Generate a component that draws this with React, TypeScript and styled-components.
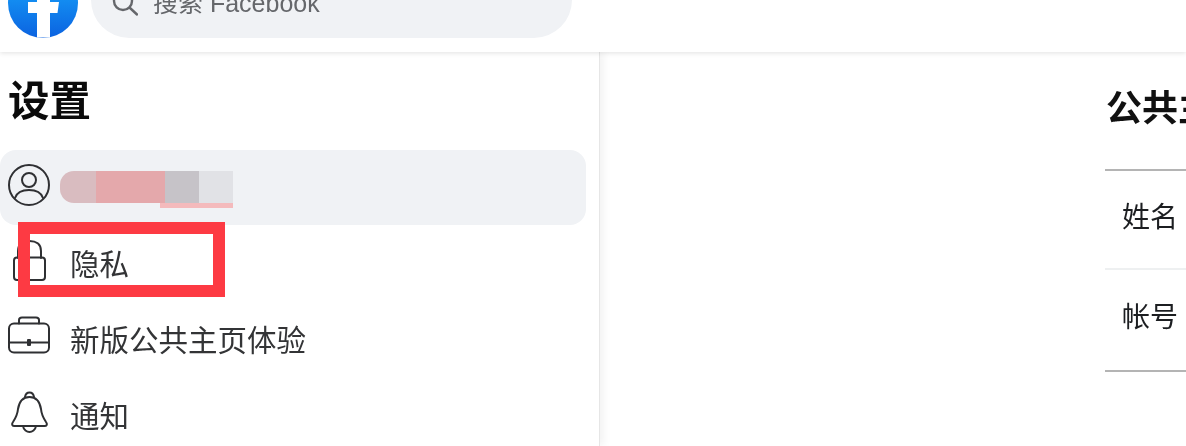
import React from 'react';
import styled, { createGlobalStyle } from 'styled-components';

const Global = createGlobalStyle`
  html, body {
    margin: 0;
    padding: 0;
    background: #fff;
  }
  body {
    font-family: "Liberation Sans", "Noto Sans CJK SC", sans-serif;
  }
`;

const S = {
  Page: styled.div`
    position: relative;
    display: flex;
    flex-direction: column;
    width: 1186px;
    height: 446px;
    overflow: hidden;
    background: #fff;
    color: #1c1e21;
    filter: blur(0.5px);
  `,
  Header: styled.header`
    position: relative;
    z-index: 2;
    flex-shrink: 0;
    display: flex;
    align-items: flex-end;
    gap: 13px;
    height: 52px;
    padding: 0 0 14px 8px;
    box-sizing: border-box;
    background: #fff;
    box-shadow: 0 1px 5px rgb(0 0 0 / 12%);
  `,
  Logo: styled.svg`
    flex-shrink: 0;
    width: 70px;
    height: 70px;
  `,
  Search: styled.div`
    flex-shrink: 0;
    display: flex;
    align-items: center;
    gap: 15px;
    width: 481px;
    height: 76px;
    padding: 6px 0 0 21px;
    box-sizing: border-box;
    border-radius: 38px;
    background: #f0f2f5;
    color: #65676b;
    font-size: 25px;
  `,
  SearchText: styled.span`
    line-height: 40px;
  `,
  Body: styled.div`
    flex: 1;
    display: flex;
    min-height: 0;
  `,
  Sidebar: styled.aside`
    flex-shrink: 0;
    width: 600px;
    box-sizing: border-box;
    padding-right: 13px;
    border-right: 1px solid #e6e6e6;
    box-shadow: 4px 0 8px rgb(0 0 0 / 5%);
  `,
  Title: styled.h1`
    margin: 0;
    height: 98px;
    padding: 24px 0 0 8px;
    box-sizing: border-box;
    font-size: 41.5px;
    line-height: 52px;
    font-weight: 700;
    color: #0b0b0b;
  `,
  Row: styled.div<{ $active?: boolean }>`
    display: flex;
    align-items: center;
    gap: 20px;
    height: ${(p) => (p.$active ? 75 : 76)}px;
    padding: 0 0 ${(p) => (p.$active ? 0 : 2)}px 8px;
    box-sizing: border-box;
    font-size: 29.5px;
    color: #333436;
    border-radius: 16px;
    background: ${(p) => (p.$active ? '#f0f2f5' : 'transparent')};
  `,
  Icon: styled.svg`
    flex-shrink: 0;
    width: 42px;
    height: 42px;
    margin-bottom: 5px;
    fill: none;
    stroke: #2f3033;
    stroke-width: 2;
    stroke-linecap: round;
    stroke-linejoin: round;
  `,
  Redacted: styled.div`
    position: relative;
    display: flex;
    height: 32px;
    margin: -2px 0 0 -10px;
  `,
  Block: styled.span<{ $w: number; $color: string; $round?: boolean }>`
    display: block;
    width: ${(p) => p.$w}px;
    background: ${(p) => p.$color};
    border-radius: ${(p) => (p.$round ? '14px 0 0 14px' : '0')};
  `,
  RedactedEdge: styled.span`
    position: absolute;
    left: 100px;
    right: 0;
    bottom: -5px;
    height: 5px;
    background: #f4babc;
  `,
  Highlight: styled.div`
    position: absolute;
    z-index: 3;
    left: 18px;
    top: 222px;
    width: 207px;
    height: 75px;
    box-sizing: border-box;
    border: 12px solid #fd3a43;
  `,
  Main: styled.main`
    flex: 1;
    min-width: 0;
    padding: 37px 0 0 505px;
    overflow: hidden;
  `,
  Heading: styled.h2`
    margin: 0;
    height: 82px;
    padding-left: 1px;
    font-size: 36px;
    line-height: 40px;
    font-weight: 700;
    white-space: nowrap;
    color: #111;
    border-bottom: 2px solid #b4b4b4;
    box-sizing: border-box;
    width: 200px;
  `,
  Field: styled.div<{ $last?: boolean }>`
    display: flex;
    align-items: center;
    width: 200px;
    height: ${(p) => (p.$last ? 102 : 99)}px;
    padding: 0 0 10px 17px;
    box-sizing: border-box;
    font-size: 28px;
    color: #1c1e21;
    border-bottom: 2px solid ${(p) => (p.$last ? '#b4b4b4' : '#eef0f1')};
  `,
};

const Settings = () => (
  <S.Page>
    <S.Header>
      <S.Logo viewBox="0 0 70 70">
        <defs>
          <linearGradient id="fb" x1="0" y1="0" x2="0" y2="1">
            <stop offset="0" stopColor="#19afff" />
            <stop offset="1" stopColor="#0b62e0" />
          </linearGradient>
        </defs>
        <circle cx="35" cy="35" r="35" fill="url(#fb)" />
        <path
          d="M29 69.6V45H20V34H29V27C29 18 35 13 43 13C46 13 49 13.5 50 13.800V23H46C43 23 42 25 42 28V34H51L49.500 45H42V69.6Z"
          fill="#fff"
        />
      </S.Logo>
      <S.Search>
        <svg width="26" height="26" viewBox="0 0 26 26" fill="none" stroke="#65676b" strokeWidth="2.4" strokeLinecap="round">
          <circle cx="11" cy="11" r="9" />
          <path d="M18 18L25 24.5" />
        </svg>
        <S.SearchText>搜索 Facebook</S.SearchText>
      </S.Search>
    </S.Header>
    <S.Body>
      <S.Sidebar>
        <S.Title>设置</S.Title>
        <S.Row $active>
          <S.Icon viewBox="0 0 42 42">
            <circle cx="21" cy="21" r="20" />
            <circle cx="21" cy="16" r="7" />
            <path d="M7 34C9 28 14 26 21 26C28 26 33 28 35 34" />
          </S.Icon>
          <S.Redacted>
            <S.Block $w={36} $color="#d9bcc0" $round />
            <S.Block $w={69} $color="#e4a8ab" />
            <S.Block $w={34} $color="#c6c3c8" />
            <S.Block $w={34} $color="#e1e2e6" />
            <S.RedactedEdge />
          </S.Redacted>
        </S.Row>
        <S.Row>
          <S.Icon viewBox="0 0 42 42">
            <path d="M10 19V12C10 5 15 2 21.5 2C28 2 33 5 33 12V19" />
            <rect x="6" y="18.5" width="31" height="22.5" rx="3" />
          </S.Icon>
          隐私
        </S.Row>
        <S.Row>
          <S.Icon viewBox="0 0 42 42">
            <path d="M11 8.5V5C11 3.5 12 2.5 14 2.5H28C30 2.5 31 3.5 31 5V8.5" />
            <rect x="1" y="8.5" width="40" height="29" rx="5" />
            <path d="M1 27.5H41" />
            <rect x="20" y="25" width="2" height="5" fill="#2f3033" />
          </S.Icon>
          新版公共主页体验
        </S.Row>
        <S.Row>
          <S.Icon viewBox="0 0 42 42">
            <path d="M21.5 6C14 6 11 12 10 18C9.5 24 7 28 5 31C3.5 33 4 35 6 35H37C39 35 39.5 33 38 31C36 28 33.5 24 33 18C32 12 29 6 21.5 6Z" />
            <path d="M17 6C17.5 3 19.5 1.5 21.5 1.5C23.5 1.5 25.5 3 26 6" />
            <path d="M15 35C15.5 39 19 41 21.5 41C24 41 27.5 39 28 35" />
          </S.Icon>
          通知
        </S.Row>
      </S.Sidebar>
      <S.Main>
        <S.Heading>公共主页设置</S.Heading>
        <S.Field>姓名</S.Field>
        <S.Field $last>帐号</S.Field>
      </S.Main>
    </S.Body>
    <S.Highlight />
  </S.Page>
);

export default function App() {
  return (
    <>
      <Global />
      <Settings />
    </>
  );
}
